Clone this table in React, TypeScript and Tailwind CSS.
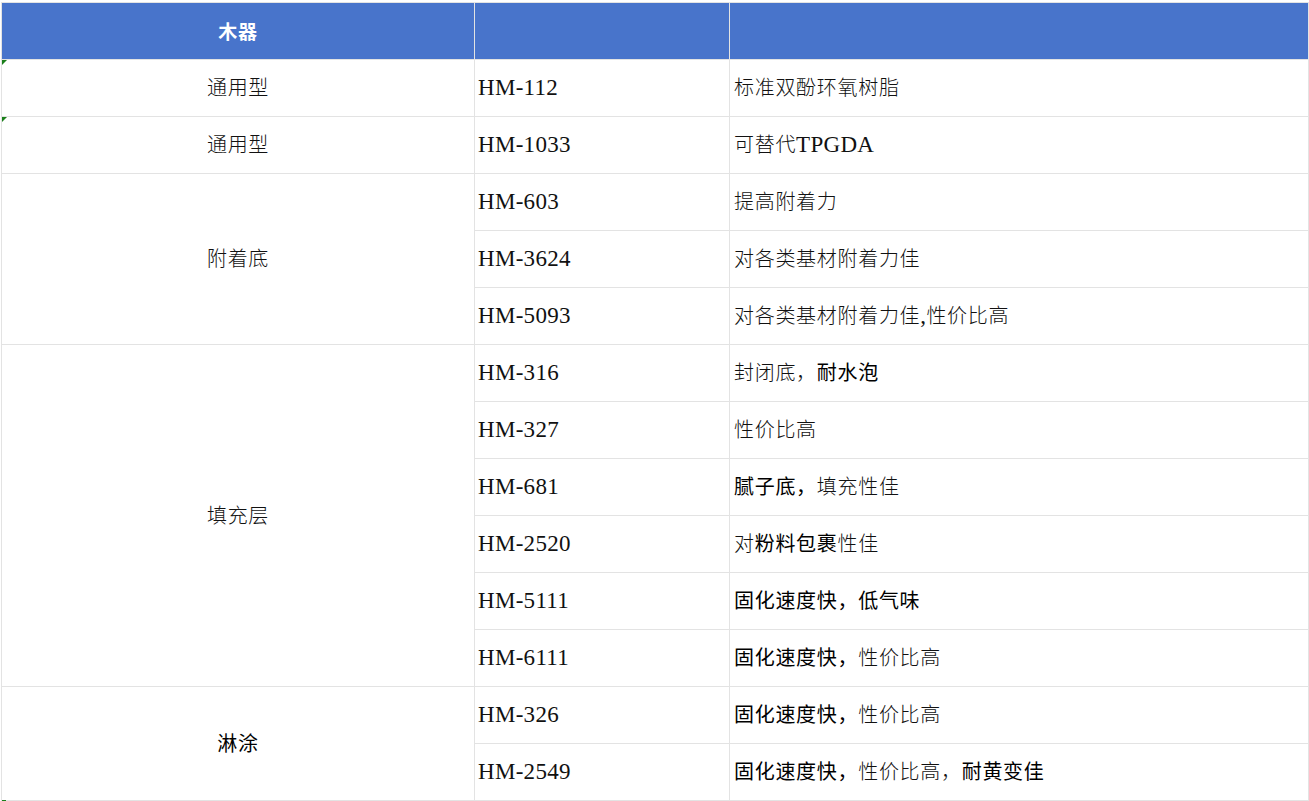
import React from "react";

type Seg = { t: string; b?: boolean; l?: boolean };

const FONT = "font-['Liberation_Serif','Noto_Sans_CJK_SC',serif]";

function Txt({ segs }: { segs: Seg[] }) {
  return (
    <span className="whitespace-nowrap">
      {segs.map((s, i) =>
        s.l ? (
          <span key={i} className="text-[23px] tracking-[0.3px]">
            {s.t}
          </span>
        ) : (
          <span key={i} className={s.b ? "font-normal text-black" : "font-light"}>
            {s.t}
          </span>
        )
      )}
    </span>
  );
}

const rows: { code: string; desc: Seg[] }[] = [
  { code: "HM-112", desc: [{ t: "标准双酚环氧树脂" }] },
  { code: "HM-1033", desc: [{ t: "可替代" }, { t: "TPGDA", l: true }] },
  { code: "HM-603", desc: [{ t: "提高附着力" }] },
  { code: "HM-3624", desc: [{ t: "对各类基材附着力佳" }] },
  { code: "HM-5093", desc: [{ t: "对各类基材附着力佳" }, { t: ",", l: true }, { t: "性价比高" }] },
  { code: "HM-316", desc: [{ t: "封闭底，" }, { t: "耐水泡", b: true }] },
  { code: "HM-327", desc: [{ t: "性价比高" }] },
  { code: "HM-681", desc: [{ t: "腻子底，", b: true }, { t: "填充性佳" }] },
  { code: "HM-2520", desc: [{ t: "对" }, { t: "粉料包裹", b: true }, { t: "性佳" }] },
  { code: "HM-5111", desc: [{ t: "固化速度快，低气味", b: true }] },
  { code: "HM-6111", desc: [{ t: "固化速度快，", b: true }, { t: "性价比高" }] },
  { code: "HM-326", desc: [{ t: "固化速度快，", b: true }, { t: "性价比高" }] },
  { code: "HM-2549", desc: [{ t: "固化速度快，", b: true }, { t: "性价比高，" }, { t: "耐黄变佳", b: true }] },
];

const groups: { label: string; start: number; span: number; bold?: boolean; mark?: boolean }[] = [
  { label: "通用型", start: 2, span: 1, mark: true },
  { label: "通用型", start: 3, span: 1, mark: true },
  { label: "附着底", start: 4, span: 3 },
  { label: "填充层", start: 7, span: 6 },
  { label: "淋涂", start: 13, span: 2, bold: true },
];

const rowStart = [
  "row-start-2",
  "row-start-3",
  "row-start-4",
  "row-start-5",
  "row-start-6",
  "row-start-7",
  "row-start-8",
  "row-start-9",
  "row-start-10",
  "row-start-11",
  "row-start-12",
  "row-start-13",
  "row-start-14",
];

const spanCls: Record<number, string> = {
  1: "row-span-1",
  2: "row-span-2",
  3: "row-span-3",
  6: "row-span-6",
};

export default function App() {
  return (
    <div className={`w-[1309px] h-[801px] overflow-hidden bg-white ${FONT} text-[20px] tracking-[0.7px] text-[#111]`}>
      <div className="ml-px mt-[2px] w-[1308px] grid grid-cols-[472px_254px_578px] grid-rows-[repeat(14,56px)] gap-px bg-[#e3e3e3] p-px">
        <div className="col-start-1 row-start-1 bg-[#4874cb] flex items-center justify-center text-white font-bold font-['Noto_Sans_CJK_SC',sans-serif] text-[19px]">
          木器
        </div>
        <div className="col-start-2 row-start-1 bg-[#4874cb]" />
        <div className="col-start-3 row-start-1 bg-[#4874cb]" />
        {groups.map((g, i) => (
          <div
            key={i}
            className={`relative col-start-1 ${rowStart[g.start - 2]} ${spanCls[g.span]} bg-white flex items-center justify-center`}
          >
            {g.mark && (
              <div className="absolute left-0 top-0 w-0 h-0 border-t-[5px] border-r-[5px] border-t-[#1a7f1a] border-r-transparent" />
            )}
            <span className={g.bold ? "font-normal text-black" : "font-light"}>{g.label}</span>
          </div>
        ))}
        {rows.map((r, i) => (
          <React.Fragment key={i}>
            <div className={`col-start-2 ${rowStart[i]} bg-white flex items-center pl-[3px] text-[23px] tracking-[0.3px]`}>
              {r.code}
            </div>
            <div className={`col-start-3 ${rowStart[i]} bg-white flex items-center pl-[4px]`}>
              <Txt segs={r.desc} />
            </div>
          </React.Fragment>
        ))}
      </div>
      <div className="relative">
        <div className="absolute left-[2px] -top-[1px] w-[4px] h-[2px] bg-[#1a7f1a]" />
      </div>
    </div>
  );
}
